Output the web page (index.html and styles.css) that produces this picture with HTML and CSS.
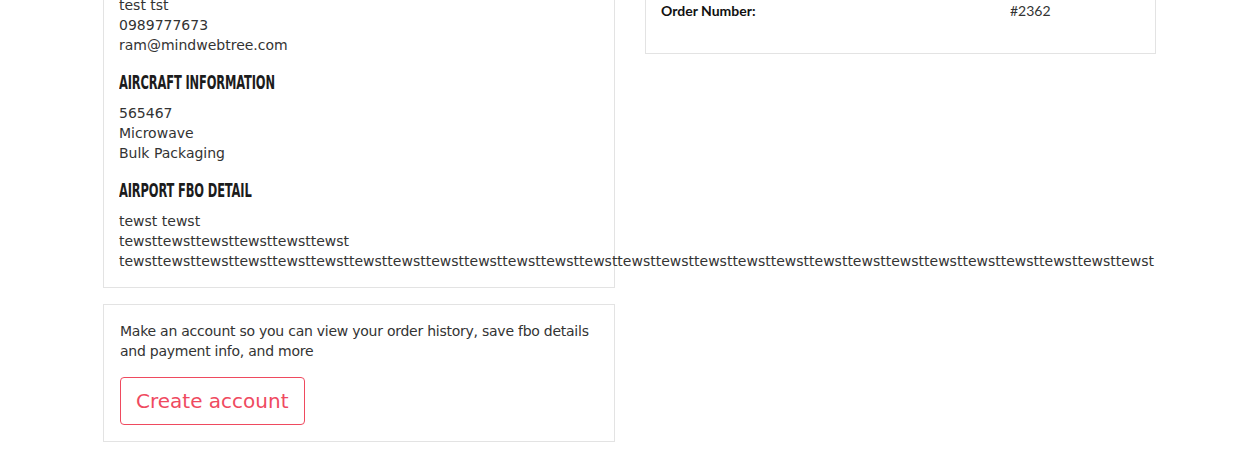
FILE: index.html
```html
<!DOCTYPE html>
<html lang="en">
<head>
<meta charset="utf-8">
<title>Order details</title>
<link rel="stylesheet" href="styles.css">
</head>
<body>
<main class="page">
  <div class="col-left">
    <section class="card details">
      <div class="lines">
        <p>test tst</p>
        <p>0989777673</p>
        <p>ram@mindwebtree.com</p>
      </div>
      <h3 class="section-title"><span>AIRCRAFT INFORMATION</span></h3>
      <div class="lines">
        <p>565467</p>
        <p>Microwave</p>
        <p>Bulk Packaging</p>
      </div>
      <h3 class="section-title"><span>AIRPORT FBO DETAIL</span></h3>
      <div class="lines">
        <p>tewst tewst</p>
        <p>tewsttewsttewsttewsttewsttewst</p>
        <p>tewsttewsttewsttewsttewsttewsttewsttewsttewsttewsttewsttewsttewsttewsttewsttewsttewsttewsttewsttewsttewsttewsttewsttewsttewsttewsttewst</p>
      </div>
    </section>
    <section class="card account">
      <p class="account-text">Make an account so you can view your order history, save fbo details and payment info, and more</p>
      <button class="btn-outline" type="button">Create account</button>
    </section>
  </div>
  <div class="col-right">
    <section class="card summary">
      <div class="summary-row">
        <span class="summary-label">Order Number:</span>
        <span class="summary-value">#2362</span>
      </div>
    </section>
  </div>
</main>
</body>
</html>
```
FILE: styles.css
```css
* { box-sizing: border-box; }
html, body { margin: 0; padding: 0; background: #fff; }
body {
  font-family: "DejaVu Sans", sans-serif;
  font-size: 14px;
  line-height: 20px;
  color: #333;
}
.page {
  display: flex;
  align-items: flex-start;
  gap: 30px;
  padding-left: 103px;
  margin-top: -22px;
}
.col-left {
  width: 512px;
  display: flex;
  flex-direction: column;
  gap: 16px;
}
.col-right { width: 511px; }
.card {
  border: 1px solid #e3e3e3;
  background: #fff;
  padding: 16px 16px 16px 15px;
}
.lines p { margin: 0; white-space: nowrap; }
.section-title {
  margin: 15px 0 9px;
  height: 24px;
  line-height: 24px;
  font-family: "DejaVu Sans Condensed", "DejaVu Sans", sans-serif;
  font-stretch: condensed;
  font-weight: 700;
  font-size: 19px;
  color: #1c1c1c;
  letter-spacing: -0.2px;
}
.section-title span {
  display: inline-block;
  transform: scaleX(0.67);
  transform-origin: left center;
}
.account { padding: 16px; }
.account-text { margin: 0; letter-spacing: -0.25px; }
.btn-outline {
  margin-top: 16px;
  display: inline-block;
  height: 48px;
  padding: 0 15px;
  border: 1px solid #ef4a5f;
  border-radius: 4px;
  background: #fff;
  color: #ef4a5f;
  font-family: "DejaVu Sans", sans-serif;
  font-size: 20px;
  line-height: 46px;
  cursor: pointer;
}
.summary { padding: 22px 16px 16px 15px; }
.summary-row {
  display: grid;
  grid-template-columns: 349px 1fr;
  padding-bottom: 16px;
  font-family: Lato, sans-serif;
  font-size: 14px;
  line-height: 20px;
  color: #222;
}
.summary-label { font-weight: 700; color: #111; }
.summary-value { color: #333; }
```
